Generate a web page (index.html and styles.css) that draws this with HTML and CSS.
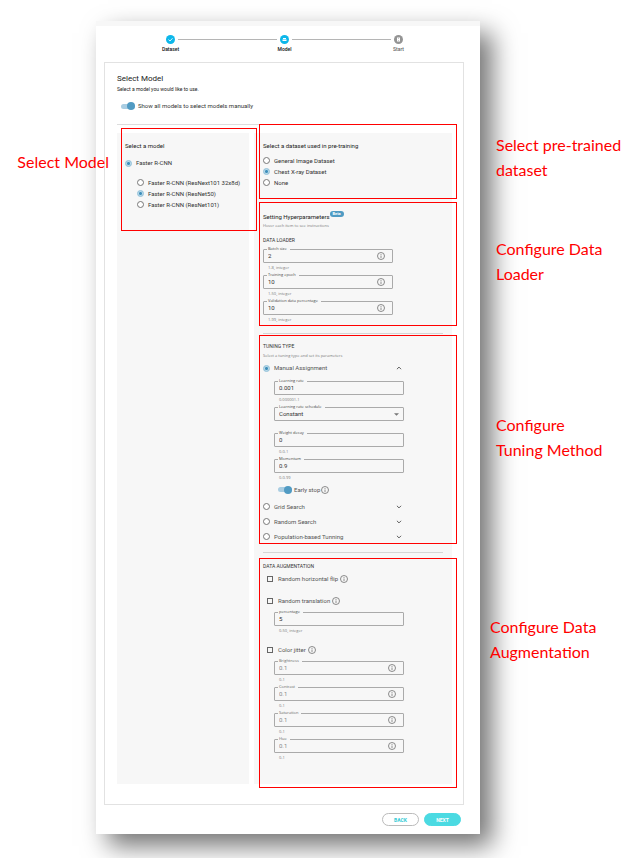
FILE: index.html
```html
<!DOCTYPE html>
<html lang="en">
<head>
<meta charset="utf-8">
<title>Select Model</title>
<link rel="stylesheet" href="styles.css">
</head>
<body>
<svg class="defs" aria-hidden="true">
  <symbol id="info" viewBox="0 0 16 16"><circle cx="8" cy="8" r="7" fill="none" stroke="currentColor" stroke-width="1.7"/><path d="M8 7v5M8 4v1.8" stroke="currentColor" stroke-width="1.6"/></symbol>
  <symbol id="down" viewBox="0 0 10 10"><path d="M1.5 3 5 6.5 8.500 3" fill="none" stroke="currentColor" stroke-width="1.4"/></symbol>
  <symbol id="up" viewBox="0 0 10 10"><path d="M1.500 7 5 3.500 8.500 7" fill="none" stroke="currentColor" stroke-width="1.4"/></symbol>
</svg>
<main class="card">
  <ol class="stepper">
    <li class="step"><svg class="dot" viewBox="0 0 18 18"><circle cx="9" cy="9" r="9"/><path d="M5 9.200 8 12l5-5.500" fill="none" stroke="#fff" stroke-width="1.700"/></svg><span>Dataset</span></li>
    <li class="line" aria-hidden="true"></li>
    <li class="step"><svg class="dot" viewBox="0 0 18 18"><circle cx="9" cy="9" r="9"/><path d="M6 6h6v2H6zM5 9h8v3H5z" fill="#fff"/></svg><span>Model</span></li>
    <li class="line" aria-hidden="true"></li>
    <li class="step todo"><svg class="dot" viewBox="0 0 18 18"><circle cx="9" cy="9" r="9"/><path d="M6 5h6v8H6zM8 7v1h2V7zM8 10v1h2v-1z" fill="#fff" fill-rule="evenodd"/></svg><span>Start</span></li>
  </ol>

  <section class="panel">
    <h1>Select Model</h1>
    <p class="lead">Select a model you would like to use.</p>
    <div class="show-all"><input class="toggle" type="checkbox" id="show-all" checked><label for="show-all">Show all models to select models manually</label></div>
    <hr class="rule">

    <div class="columns">
      <div class="column models">
        <section class="group">
          <h2>Select a model</h2>
          <div class="option family"><input type="radio" name="family" id="frcnn" checked><label for="frcnn">Faster R-CNN</label></div>
          <div class="variants">
            <div class="option"><input type="radio" name="variant" id="v1"><label for="v1">Faster R-CNN (ResNext101 32x8d)</label></div>
            <div class="option"><input type="radio" name="variant" id="v2" checked><label for="v2">Faster R-CNN (ResNet50)</label></div>
            <div class="option"><input type="radio" name="variant" id="v3"><label for="v3">Faster R-CNN (ResNet101)</label></div>
          </div>
          <div class="mark mark-model"><p class="callout">Select Model</p></div>
        </section>
      </div>

      <div class="column settings">
        <section class="group">
          <h2>Select a dataset used in pre-training</h2>
          <div class="choices">
            <div class="option"><input type="radio" name="pre" id="p1"><label for="p1">General Image Dataset</label></div>
            <div class="option"><input type="radio" name="pre" id="p2" checked><label for="p2">Chest X-ray Dataset</label></div>
            <div class="option"><input type="radio" name="pre" id="p3"><label for="p3">None</label></div>
          </div>
          <div class="mark mark-dataset"><p class="callout">Select pre-trained<br>dataset</p></div>
        </section>

        <section class="group hyper">
          <h2>Setting Hyperparameters<span class="badge">Beta</span></h2>
          <p class="hint">Hover each item to see instructions</p>
          <h3 class="spaced">DATA LOADER</h3>
          <div class="fields">
            <div class="field"><div class="box"><label for="batch">Batch size</label><input id="batch" value="2"><svg class="info"><use href="#info"/></svg></div><p>1-8, integer</p></div>
            <div class="field"><div class="box"><label for="epoch">Training epoch</label><input id="epoch" value="10"><svg class="info"><use href="#info"/></svg></div><p>1-50, integer</p></div>
            <div class="field"><div class="box"><label for="valid">Validation data percentage</label><input id="valid" value="10"><svg class="info"><use href="#info"/></svg></div><p>1-99, integer</p></div>
          </div>
          <div class="mark mark-loader"><p class="callout">Configure Data<br>Loader</p></div>
        </section>

        <hr class="split">

        <section class="group tuning">
          <h3>TUNING TYPE</h3>
          <p class="hint">Select a tuning type and set its parameters</p>
          <div class="option manual"><input type="radio" name="tune" id="t1" checked><label for="t1">Manual Assignment</label><svg class="chevron"><use href="#up"/></svg></div>
          <div class="fields nested">
            <div class="field"><div class="box"><label for="rate">Learning rate</label><input id="rate" value="0.001"></div><p>0.000001-1</p></div>
            <div class="field"><div class="box"><label for="sched">Learning rate schedule</label><select id="sched"><option>Constant</option></select><svg class="arrow" viewBox="0 0 8 8"><path d="M0 2h8L4 6z"/></svg></div><p></p></div>
            <div class="field"><div class="box"><label for="decay">Weight decay</label><input id="decay" value="0"></div><p>0-0.1</p></div>
            <div class="field"><div class="box"><label for="moment">Momentum</label><input id="moment" value="0.9"></div><p>0-0.99</p></div>
          </div>
          <div class="early"><input class="toggle" type="checkbox" id="early" checked><label for="early">Early stop</label><svg class="info"><use href="#info"/></svg></div>
          <div class="others">
            <div class="option"><input type="radio" name="tune" id="t2"><label for="t2">Grid Search</label><svg class="chevron"><use href="#down"/></svg></div>
            <div class="option"><input type="radio" name="tune" id="t3"><label for="t3">Random Search</label><svg class="chevron"><use href="#down"/></svg></div>
            <div class="option"><input type="radio" name="tune" id="t4"><label for="t4">Population-based Tunning</label><svg class="chevron"><use href="#down"/></svg></div>
          </div>
          <div class="mark mark-tuning"><p class="callout">Configure<br>Tuning Method</p></div>
        </section>

        <hr class="split">

        <section class="group augment">
          <h3>DATA AUGMENTATION</h3>
          <div class="check first"><input type="checkbox" id="flip"><label for="flip">Random horizontal flip</label><svg class="info"><use href="#info"/></svg></div>
          <div class="check"><input type="checkbox" id="trans"><label for="trans">Random translation</label><svg class="info"><use href="#info"/></svg></div>
          <div class="fields nested">
            <div class="field"><div class="box"><label for="pct">percentage</label><input id="pct" value="5"></div><p>0-50, integer</p></div>
          </div>
          <div class="check jitter"><input type="checkbox" id="jit"><label for="jit">Color jitter</label><svg class="info"><use href="#info"/></svg></div>
          <div class="fields nested muted">
            <div class="field"><div class="box"><label for="bri">Brightness</label><input id="bri" value="0.1"><svg class="info"><use href="#info"/></svg></div><p>0-1</p></div>
            <div class="field"><div class="box"><label for="con">Contrast</label><input id="con" value="0.1"><svg class="info"><use href="#info"/></svg></div><p>0-1</p></div>
            <div class="field"><div class="box"><label for="sat">Saturation</label><input id="sat" value="0.1"><svg class="info"><use href="#info"/></svg></div><p>0-1</p></div>
            <div class="field"><div class="box"><label for="hue">Hue</label><input id="hue" value="0.1"><svg class="info"><use href="#info"/></svg></div><p>0-1</p></div>
          </div>
          <div class="mark mark-augment"><p class="callout">Configure Data<br>Augmentation</p></div>
        </section>
      </div>
    </div>
  </section>

  <footer class="actions">
    <button class="back" type="button">BACK</button>
    <button class="next" type="button">NEXT</button>
  </footer>
</main>
</body>
</html>
```

FILE: styles.css
```css
* { box-sizing: border-box; }

body {
  margin: 0;
  padding: 21px 152px 24px 96px;
  background: #fff;
  color: #333;
  font: 6px/10px Roboto, "Liberation Sans", sans-serif;
  overflow: hidden;
}

h1, h2, h3, p, ol { margin: 0; padding: 0; font-weight: 400; }
svg { display: block; flex: none; }
.defs { position: absolute; width: 0; height: 0; }

.card {
  background: #fff;
  border-top: 5px solid #f7f7f7;
  padding-bottom: 8px;
  box-shadow: 12px 12px 24px rgba(0, 0, 0, .55);
}

/* Stepper */
.stepper { display: flex; list-style: none; padding: 9px 77px 9px 70px; }
.step {
  width: 9px;
  display: flex;
  flex-direction: column;
  align-items: center;
  gap: 1px;
  font-size: 5px;
  font-weight: 500;
  line-height: 8px;
  color: #111;
  white-space: nowrap;
}
.dot { width: 9px; height: 9px; fill: #0db7ea; }
.todo { color: #666; }
.todo .dot { fill: #949494; }
.line { flex: 1; height: 1px; margin: 4px 3px 0; background: #b5b5b5; }

/* Panel */
.panel {
  margin: 0 16px 0 8px;
  border: 1px solid #e2e2e2;
  padding: 10px 7px 20px 12px;
}
h1 { font-size: 8px; line-height: 12px; color: #222; }
.lead { font-size: 5px; line-height: 8px; color: #222; }
.show-all { display: flex; align-items: center; gap: 3px; margin: 8px 0 13px 4px; }
.rule, .split { border: 0; height: 1px; background: #ddd; margin: 0; }
.rule { margin-bottom: 8px; }

.columns { display: grid; grid-template-columns: 132fr 198fr; gap: 5px; margin-right: 4px; }
.column { background: #f7f7f7; }
.models { padding: 8px; }
.settings { padding: 8px 9px 19px; }
.group { position: relative; }
h2 { font-size: 6px; line-height: 10px; color: #222; }
h3 { font-size: 5px; line-height: 9px; color: #333; }
.hint { font: 4px/9px "Open Sans", sans-serif; color: #777; }
.spaced { margin-top: 6px; }
.hyper { margin-top: 23px; }
.split { margin: 6px 0 8px; background: #d5d5d5; }
.tuning + .split { margin: 8px 0 9px; }

/* Options */
.option, .check, .early { display: flex; align-items: center; }
.option { height: 11px; gap: 4px; }
.choices { margin-top: 4px; }
.family { height: 10px; margin-top: 7px; }
.variants { margin: 9px 0 0 12px; }
.manual, .others .option { width: 77%; }
.manual { height: 10px; margin: 3px 0 8px; }
.others { margin-top: 5px; }
.others .option { height: 15px; }
.manual label, .others label { flex: 1; color: #555; }

input[type="radio"], input[type="checkbox"] { appearance: none; flex: none; margin: 0; }
input[type="radio"] { width: 7px; height: 7px; border: 1px solid #777; border-radius: 50%; background: #fff; }
input[type="radio"]:checked {
  border-color: #8ebfd9;
  background: radial-gradient(circle, #3f8fbb 1px, #b9d9e8 2px);
}
.check input { width: 6px; height: 6px; border: 1px solid #666; }
.check { height: 10px; margin: 12px 0 0 4px; color: #555; }
.check label { margin: 0 2px 0 5px; }
.check.first { margin-top: 3px; }
.check + .nested { margin-top: 6px; }
.check.jitter { margin-top: 7px; }

input.toggle { display: flex; align-items: center; justify-content: flex-end; width: 14px; height: 5px; border-radius: 3px; background: #a9cde2; }
.toggle::before { content: ""; width: 8px; height: 8px; flex: none; border-radius: 50%; background: #519bc3; }
.early { height: 9px; margin-left: 15px; color: #555; }
.early label { margin: 0 1px 0 2px; }
.info { width: 8px; height: 8px; color: #777; }
.chevron { width: 6px; height: 6px; color: #444; }

/* Outlined fields */
.fields { width: 72%; margin-top: 4px; }
.nested { margin: 0 0 0 11px; }
.field { height: 26px; }
.box {
  position: relative;
  display: flex;
  align-items: center;
  height: 14px;
  border: 1px solid #aaa;
  border-radius: 1px;
  padding: 0 7px 0 4px;
}
.box label {
  position: absolute;
  top: -4px;
  left: 3px;
  padding: 0 3px 0 1px;
  background: #f7f7f7;
  font: 4px/6px "Open Sans", sans-serif;
  color: #444;
}
.box input, .box select {
  flex: 1;
  min-width: 0;
  height: 10px;
  margin: 0;
  border: 0;
  padding: 0;
  appearance: none;
  background: none;
  color: #333;
  font: 6px/10px Roboto, sans-serif;
}
.arrow { width: 5px; height: 5px; margin-right: -3px; fill: #777; }
.field p { margin-left: 5px; font: 4px/10px "Open Sans", sans-serif; color: #777; }
.muted .box input { color: #888; }
.muted .box label { color: #666; }

.badge {
  display: inline-block;
  height: 6px;
  padding: 0 3px;
  border-radius: 3px;
  background: #4f9bc3;
  color: #fff;
  font-size: 4px;
  font-weight: 700;
  line-height: 6px;
  vertical-align: 4px;
}
.hyper h2 { height: 10px; }

/* Annotations laid over the form */
.mark { position: absolute; border: 1px solid #f00; left: -4px; right: -14px; pointer-events: none; }
.mark-model { top: -13px; bottom: -21px; right: -16px; }
.mark-dataset { top: -17px; bottom: -11px; }
.mark-loader { top: -9px; bottom: 1px; }
.mark-tuning { top: -7px; bottom: 0; }
.mark-augment { top: -4px; bottom: -23px; }
.callout {
  position: absolute;
  top: 7px;
  left: calc(100% + 40px);
  color: #f00;
  font: 16px/25px Lato, sans-serif;
  white-space: nowrap;
}
.mark-model .callout { top: 20px; left: auto; right: calc(100% + 13px); }
.mark-loader .callout { top: 33px; }
.mark-tuning .callout { top: 76px; }
.mark-augment .callout { top: 55px; left: calc(100% + 34px); }

/* Footer */
.actions { display: flex; justify-content: flex-end; gap: 5px; margin: 8px 19px 0 0; }
.actions button {
  width: 37px;
  height: 13px;
  border: 1px solid #bbb;
  border-radius: 7px;
  padding: 0;
  background: #fff;
  color: #35cbd5;
  font: 700 5px/10px Roboto, sans-serif;
}
.actions .next { border-color: #4bdae2; background: #4bdae2; color: #fff; }
```
